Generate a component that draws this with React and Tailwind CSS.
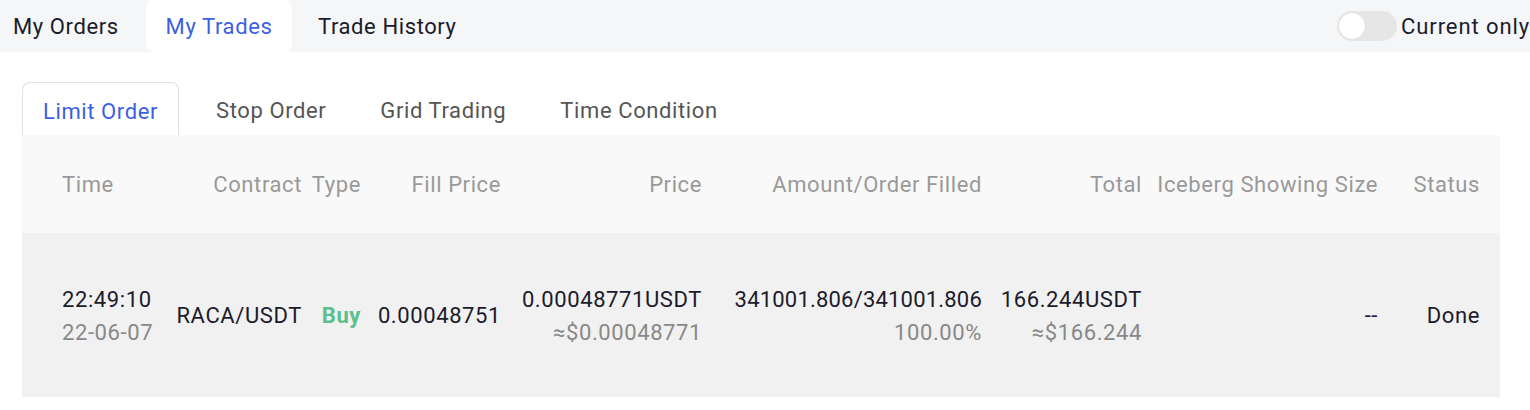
import React, { useState } from 'react';

const font = { fontFamily: 'Roboto, "Noto Sans", sans-serif' };

const topTabs = ['My Orders', 'My Trades', 'Trade History'];
const subTabs = ['Limit Order', 'Stop Order', 'Grid Trading', 'Time Condition'];

const cols = 'grid grid-cols-[110px_130px_59px_140px_201px_280px_160px_236px_102px]';

export default function App() {
  const [tab, setTab] = useState('My Trades');
  const [sub, setSub] = useState('Limit Order');
  const [currentOnly, setCurrentOnly] = useState(false);

  return (
    <div className="w-[1530px] h-[410px] bg-white overflow-hidden text-[22px] tracking-[0.6px] text-[#1b1b2b]" style={font}>
      {/* Top tabs */}
      <div className="h-[52px] bg-[#f5f6f8] flex items-center justify-between">
        <div className="flex h-full">
          {topTabs.map((t) => (
            <button
              key={t}
              onClick={() => setTab(t)}
              className={`h-full flex items-center ${
                t === 'My Orders' ? 'pl-[13px] w-[146px]' : t === 'My Trades' ? 'w-[146px] justify-center' : 'pl-[26px]'
              } ${t === tab ? 'bg-white text-[#3d5fe3] rounded-lg' : ''}`}
            >
              {t}
            </button>
          ))}
        </div>
        <div className="flex items-center gap-[4px]">
          <button
            onClick={() => setCurrentOnly(!currentOnly)}
            className={`w-[60px] h-[30px] rounded-full p-[2px] flex items-center ${currentOnly ? 'bg-[#3d5fe3] justify-end' : 'bg-[#e6e6e6] justify-start'}`}
          >
            <span className="w-[26px] h-[26px] rounded-full bg-white shadow-[0_0_1px_rgba(0,0,0,0.15)]" />
          </button>
          <span className="whitespace-nowrap tracking-[0.9px]">Current only</span>
        </div>
      </div>

      <div className="pl-[22px] pr-[30px]">
        {/* Sub tabs */}
        <div className="flex items-end h-[83px] pt-[30px]">
          {subTabs.map((t) => (
            <button
              key={t}
              onClick={() => setSub(t)}
              className={`h-[53px] flex items-center pt-[4px] ${
                t === sub
                  ? 'w-[157px] justify-center border border-b-0 border-[#dfe1e6] rounded-t-lg text-[#3d5fe3]'
                  : 'text-[#555] ' + (t === 'Stop Order' ? 'pl-[37px]' : 'pl-[54px]')
              }`}
            >
              {t}
            </button>
          ))}
        </div>

        {/* Table header */}
        <div className={`${cols} bg-[#f9f9f9] h-[98px] items-center pl-[40px] text-[#999]`}>
          <div>Time</div>
          <div className="text-right">Contract</div>
          <div className="text-right">Type</div>
          <div className="text-right">Fill Price</div>
          <div className="text-right">Price</div>
          <div className="text-right">Amount/Order Filled</div>
          <div className="text-right">Total</div>
          <div className="text-right whitespace-nowrap">Iceberg Showing Size</div>
          <div className="text-right">Status</div>
        </div>

        {/* Row */}
        <div className={`${cols} bg-[#f1f1f1] h-[164px] items-center pl-[40px] leading-[33px]`}>
          <div className="pt-[2px]">
            <div>22:49:10</div>
            <div className="text-[#888]">22-06-07</div>
          </div>
          <div className="text-right">RACA/USDT</div>
          <div className="text-right font-bold text-[#5bbf8e]">Buy</div>
          <div className="text-right">0.00048751</div>
          <div className="text-right pt-[2px]">
            <div>0.00048771USDT</div>
            <div className="text-[#888]">≈$0.00048771</div>
          </div>
          <div className="text-right pt-[2px]">
            <div className="tracking-[0.2px]">341001.806/341001.806</div>
            <div className="text-[#888]">100.00%</div>
          </div>
          <div className="text-right pt-[2px]">
            <div>166.244USDT</div>
            <div className="text-[#888]">≈$166.244</div>
          </div>
          <div className="text-right">--</div>
          <div className="text-right">Done</div>
        </div>
      </div>
    </div>
  );
}
